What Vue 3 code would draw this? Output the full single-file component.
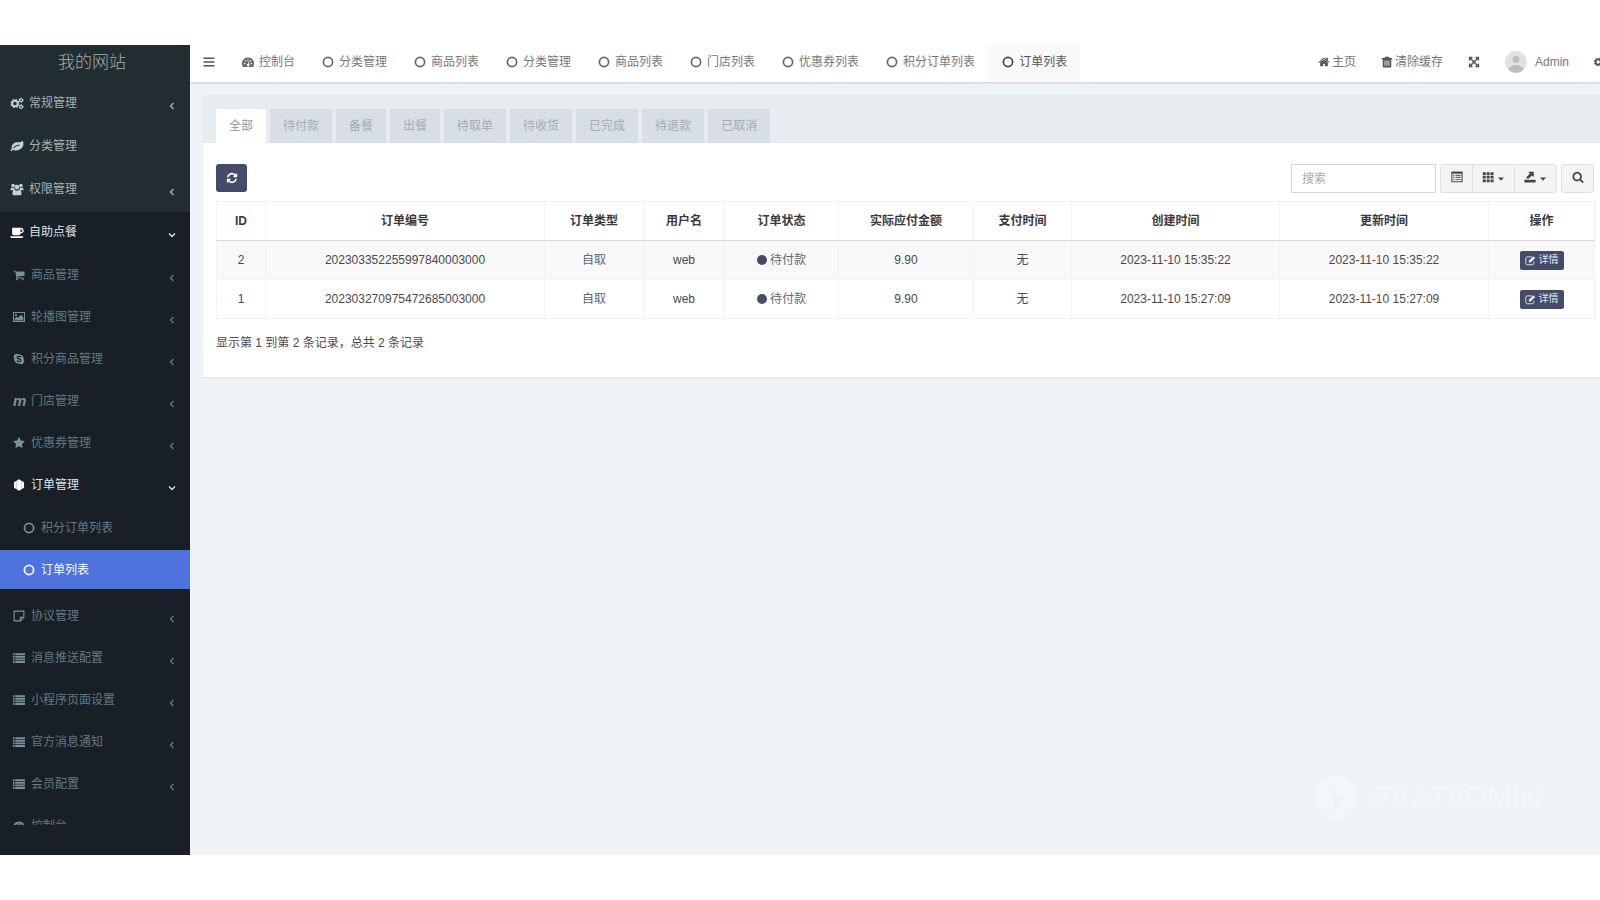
<template>
  <div class="page">
    <div class="shell">
      <aside class="sidebar">
        <a href="#" class="brand">我的网站</a>
        <nav class="menu-scroll">
          <ul class="menu">
            <li v-for="item in topMenu" :key="item.text">
              <a href="#" class="menu-link">
                <Icon :name="item.icon" class="menu-icon" />
                <span>{{ item.text }}</span>
                <Icon v-if="item.arrow" name="left" class="arrow" />
              </a>
            </li>
            <li class="open">
              <a href="#" class="menu-link">
                <Icon name="coffee" class="menu-icon" />
                <span>自助点餐</span>
                <Icon name="down" class="arrow" />
              </a>
              <ul class="submenu">
                <li v-for="item in subMenu" :key="item.text">
                  <a href="#" class="menu-link" :class="{ opened: item.children }">
                    <b v-if="item.icon === 'm'" class="menu-icon glyph-m">m</b>
                    <Icon v-else :name="item.icon" class="menu-icon" />
                    <span>{{ item.text }}</span>
                    <Icon v-if="!item.last" :name="item.children ? 'down' : 'left'" class="arrow" />
                  </a>
                  <ul v-if="item.children" class="leafmenu">
                    <li v-for="child in item.children" :key="child">
                      <a href="#" class="menu-link" :class="{ active: child === '订单列表' }">
                        <Icon name="circle" class="menu-icon" />
                        <span>{{ child }}</span>
                      </a>
                    </li>
                  </ul>
                </li>
              </ul>
            </li>
          </ul>
        </nav>
      </aside>

      <main class="main">
        <header class="topbar">
          <button type="button" class="toggle" aria-label="菜单"><Icon name="bars" /></button>
          <nav class="nav-tabs">
            <a
              v-for="(tab, idx) in navTabs"
              :key="idx"
              href="#"
              class="nav-tab"
              :class="{ active: idx === navTabs.length - 1 }"
            >
              <Icon :name="idx === 0 ? 'dashboard' : 'circle'" />
              <span>{{ tab }}</span>
            </a>
          </nav>
          <nav class="nav-right">
            <a href="#" class="nav-item"><Icon name="home" /><span>主页</span></a>
            <a href="#" class="nav-item"><Icon name="trash" /><span>清除缓存</span></a>
            <a href="#" class="nav-item" aria-label="全屏"><Icon name="arrows" /></a>
            <a href="#" class="nav-item user"><Icon name="avatar" class="avatar" /><span>Admin</span></a>
            <a href="#" class="nav-item" aria-label="设置"><Icon name="cogs" /></a>
          </nav>
        </header>

        <section class="panel">
          <ul class="status-tabs">
            <li v-for="(s, idx) in statuses" :key="s">
              <a href="#" :class="{ active: idx === 0 }">{{ s }}</a>
            </li>
          </ul>
          <div class="panel-body">
            <div class="toolbar">
              <button type="button" class="btn-refresh" aria-label="刷新"><Icon name="refresh" /></button>
              <input v-model="keyword" class="search" type="text" placeholder="搜索" aria-label="搜索" />
              <div class="btn-group">
                <button type="button" class="btn" aria-label="切换"><Icon name="list-alt" /></button>
                <button type="button" class="btn wide" aria-label="列"><Icon name="grid" /><Icon name="caret" class="caret" /></button>
                <button type="button" class="btn wide" aria-label="导出"><Icon name="export" /><Icon name="caret" class="caret" /></button>
              </div>
              <button type="button" class="btn single" aria-label="普通搜索"><Icon name="search" /></button>
            </div>
            <table class="orders">
              <thead>
                <tr>
                  <th v-for="c in columns" :key="c">{{ c }}</th>
                </tr>
              </thead>
              <tbody>
                <tr v-for="row in orders" :key="row.id">
                  <td>{{ row.id }}</td>
                  <td>{{ row.no }}</td>
                  <td><a href="#" class="type">自取</a></td>
                  <td>web</td>
                  <td><span class="state"><i class="dot"></i>待付款</span></td>
                  <td>9.90</td>
                  <td>无</td>
                  <td>{{ row.time }}</td>
                  <td>{{ row.time }}</td>
                  <td>
                    <button type="button" class="btn-detail"><Icon name="edit" /><span>详情</span></button>
                  </td>
                </tr>
              </tbody>
            </table>
            <p class="summary">显示第 1 到第 2 条记录，总共 2 条记录</p>
          </div>
        </section>

        <div class="watermark"><Icon name="bolt" /><span>FASTADMIN</span></div>
      </main>
    </div>
  </div>
</template>

<script setup>
import { h, ref } from 'vue';

// name: [viewBox, svg markup]
const icons = {
  left: ['0 0 12 12', '<path d="M7.500 3L4.500 6l3 3" fill="none" stroke="currentColor" stroke-width="1.400"/>'],
  down: ['0 0 12 12', '<path d="M3 4.500l3 3 3-3" fill="none" stroke="currentColor" stroke-width="1.400"/>'],
  circle: ['0 0 12 12', '<circle cx="6" cy="6" r="4.600" fill="none" stroke="currentColor" stroke-width="1.700"/>'],
  bars: ['0 0 12 12', '<path d="M.5 1.500h11v1.500H.5zM.5 5.300h11v1.500H.5zM.5 9h11v1.500H.5z"/>'],
  caret: ['0 0 8 8', '<path d="M1 2.500h6L4 5.700z"/>'],
  dashboard: ['0 0 16 16', '<path fill-rule="evenodd" d="M8 2a8 8 0 0 0-6.800 12.200c.2.300.4.300.7.300h12.200c.3 0 .5 0 .7-.3A8 8 0 0 0 8 2zM3.400 9a1.100 1.100 0 1 1 0 2.200 1.100 1.100 0 0 1 0-2.200zM4.800 5.600a1.100 1.100 0 1 1 0 2.200 1.100 1.100 0 0 1 0-2.200zM8 4.200a1.100 1.100 0 1 1 0 2.200 1.100 1.100 0 0 1 0-2.200zM12.600 9a1.100 1.100 0 1 1 0 2.200 1.100 1.100 0 0 1 0-2.200zM11.300 5.600a1.100 1.100 0 1 1 0 2.200 1.100 1.100 0 0 1 0-2.200zM9 7l.9.300-.8 3.200a1.700 1.700 0 1 1-1-.2z"/>'],
  cogs: ['0 0 16 16', '<circle cx="5.500" cy="8" r="3.400" fill="none" stroke="currentColor" stroke-width="2.400"/><circle cx="5.500" cy="8" r="4.900" fill="none" stroke="currentColor" stroke-width="1.400" stroke-dasharray="2.200 1.650"/><circle cx="13" cy="4" r="1.800" fill="none" stroke="currentColor" stroke-width="1.500"/><circle cx="13" cy="4" r="2.700" fill="none" stroke="currentColor" stroke-width=".8" stroke-dasharray="1.400 1.400"/><circle cx="13" cy="12" r="1.800" fill="none" stroke="currentColor" stroke-width="1.500"/><circle cx="13" cy="12" r="2.700" fill="none" stroke="currentColor" stroke-width=".8" stroke-dasharray="1.400 1.400"/>'],
  leaf: ['0 0 1792 1792', '<path d="M1280 704q0-26-19-45t-45-19q-172 0-318 49.500t-259.500 134-235.500 219.500q-19 21-19 45 0 26 19 45t45 19q24 0 45-19 27-24 74-71t67-66q137-124 268.500-176t313.500-52q26 0 45-19t19-45zm512-198q0 95-20 193-46 224-184.500 383t-357.500 268q-214 108-438 108-148 0-286-47-15-5-88-42t-96-37q-16 0-39.500 32t-45 70-52.500 70-60 32q-43 0-63.500-17.500t-45.500-59.500q-2-4-6-11t-5.500-10-3-9.500-1.500-13.500q0-35 31-73.500t68-65.500 68-56 31-48q0-4-14-38t-16-44q-9-51-9-104 0-115 43.500-220t119-184.500 170.500-139 204-95.500q55-18 145-25.500t179.500-9 178.500-6 163.500-24 113.500-56.500l29.500-29.500 29.500-28 27-20 36.500-16 43.500-4.500q39 0 70.500 46t47.500 112 24 124 8 96z"/>'],
  users: ['0 0 16 16', '<circle cx="3.200" cy="3" r="2.200"/><circle cx="12.800" cy="3" r="2.200"/><circle cx="8" cy="5" r="3"/><path d="M0 8.700C0 6.800.6 5.400 1.500 5.400c.9.600 1.800.7 3 .4.100 1 .4 1.700 1 2.300l-1.300.8H1.200C.5 8.900 0 9.500 0 8.700zM16 8.700c0-1.900-.6-3.300-1.500-3.300-.9.600-1.800.7-3 .4-.1 1-.4 1.700-1 2.300l1.300.8h3c.7 0 1.200.6 1.200-.2zM2.500 13.200c0-3 .8-4.900 2.500-4.900 1.800 1.400 4.200 1.400 6 0 1.700 0 2.500 1.900 2.500 4.900 0 1.300-.8 2-2 2h-7c-1.200 0-2-.7-2-2z"/>'],
  coffee: ['0 0 1856 1792', '<path d="M1664 640q0-80-56-136t-136-56h-64v384h64q80 0 136-56t56-136zm-1664 768h1792q0 106-75 181t-181 75h-1280q-106 0-181-75t-75-181zm1856-768q0 159-112.500 271.500t-271.500 112.500h-64v32q0 92-66 158t-158 66h-704q-92 0-158-66t-66-158v-736q0-26 19-45t45-19h1152q159 0 271.500 112.500t112.500 271.500z"/>'],
  cart: ['0 0 1792 1792', '<path d="M704 1536q0 52-38 90t-90 38-90-38-38-90 38-90 90-38 90 38 38 90zm896 0q0 52-38 90t-90 38-90-38-38-90 38-90 90-38 90 38 38 90zm128-1088v512q0 24-16.500 42.500t-40.500 21.500l-1044 122q13 60 13 70 0 16-24 64h920q26 0 45 19t19 45-19 45-45 19h-1024q-26 0-45-19t-19-45q0-11 8-31.500t16-36 21.500-40 15.500-29.500l-177-823h-204q-26 0-45-19t-19-45 19-45 45-19h256q16 0 28.500 6.500t19.500 15.500 13 24.500 8 26 5.500 29.500 4.500 26h1201q26 0 45 19t19 45z"/>'],
  image: ['0 0 16 16', '<path d="M.7 2h14.600v12H.7z" fill="none" stroke="currentColor" stroke-width="1.400"/><circle cx="4" cy="5.500" r="1.500"/><path d="M2.300 12.500V10L5 7.500l1.600 1.600L10.700 5l3 3.300v4.200z"/>'],
  skype: ['0 0 16 16', '<path d="M4.600 1a4 4 0 0 1 2.500.7 6.500 6.500 0 0 1 7.200 7.500 4 4 0 0 1-5.600 5.200A6.500 6.500 0 0 1 1.500 7 4 4 0 0 1 4.600 1z"/><path d="M10.600 5.700C9.500 4 5.400 4.200 5.600 6.200c.2 2 5 1.200 5 3.500 0 2.100-4.300 2.200-5.300.3" fill="none" stroke="#181f26" stroke-width="1.500"/>'],
  star: ['0 0 1792 1792', '<path d="M1728 647q0 22-26 48l-363 354 86 500q1 7 1 20 0 21-10.500 35.500t-30.500 14.500q-19 0-40-12l-449-236-449 236q-22 12-40 12-21 0-31.500-14.500t-10.500-35.500q0-6 2-20l86-500-364-354q-25-27-25-48 0-37 56-46l502-73 225-455q19-41 49-41t49 41l225 455 502 73q56 9 56 46z"/>'],
  hexagon: ['0 0 16 16', '<path d="M8 .4l6.700 3.800v7.600L8 15.600l-6.700-3.800V4.200z"/><path d="M4.500 1.500v13M11.500 1.500v13" stroke="#181f26" stroke-width=".3"/>'],
  note: ['0 0 16 16', '<path d="M1.500 1.500h13v8.300L9.800 14.500H1.500zM14.500 9.800H9.800v4.700" fill="none" stroke="currentColor" stroke-width="1.500"/>'],
  list: ['0 0 16 16', '<path d="M0 1.500h2V4H0zM3 1.500h13V4H3zM0 5h2v2.500H0zM3 5h13v2.500H3zM0 8.500h2V11H0zM3 8.500h13V11H3zM0 12h2v2.500H0zM3 12h13v2.500H3z"/>'],
  home: ['0 0 1792 1792', '<path d="M1472 992v480q0 26-19 45t-45 19h-384v-384h-256v384h-384q-26 0-45-19t-19-45v-480q0-1 .5-3t.5-3l575-474 575 474q1 2 1 6zm223-69l-62 74q-8 9-21 11h-3q-13 0-21-7l-692-577-692 577q-12 8-24 7-13-2-21-11l-62-74q-8-10-7-23.500t11-21.500l719-599q32-26 76-26t76 26l244 204v-195q0-14 9-23t23-9h192q14 0 23 9t9 23v408l219 182q10 8 11 21.500t-7 23.500z"/>'],
  trash: ['0 0 16 16', '<path fill-rule="evenodd" d="M5.500 1h5l.7 1.800H15v1.400h-1.300V14c0 .7-.5 1.200-1.200 1.200h-9c-.7 0-1.200-.5-1.200-1.200V4.200H1V2.800h3.800zM4.800 6v7h1.100V6zm2.600 0v7h1.100V6zM10 6v7h1.100V6z"/>'],
  arrows: ['0 0 1792 1792', '<path d="M1411 541l-355 355 355 355 144-144q29-31 70-14 39 17 39 59v448q0 26-19 45t-45 19h-448q-42 0-59-40-17-39 14-69l144-144-355-355-355 355 144 144q31 30 14 69-17 40-59 40h-448q-26 0-45-19t-19-45v-448q0-42 40-59 39-17 69 14l144 144 355-355-355-355-144 144q-19 19-45 19-12 0-24-5-40-17-40-59v-448q0-26 19-45t45-19h448q42 0 59 40 17 39-14 69l-144 144 355 355 355-355-144-144q-31-30-14-69 17-40 59-40h448q26 0 45 19t19 45v448q0 42-39 59-13 5-25 5-26 0-45-19z"/>'],
  avatar: ['0 0 22 22', '<circle cx="11" cy="11" r="11" fill="#e2e2e2"/><circle cx="11" cy="8.500" r="3.500" fill="#bdbdbd"/><path d="M3.500 18.500c1-3.500 4-4.500 7.500-4.500s6.500 1 7.500 4.500A11 11 0 0 1 11 22a11 11 0 0 1-7.500-3.500z" fill="#bdbdbd"/>'],
  refresh: ['0 0 1792 1792', '<path d="M1639 1056q0 5-1 7-64 268-268 434.500t-478 166.500q-146 0-282.500-55t-243.500-157l-129 129q-19 19-45 19t-45-19-19-45v-448q0-26 19-45t45-19h448q26 0 45 19t19 45-19 45l-137 137q71 66 161 102t187 36q134 0 250-65t186-179q11-17 53-117 8-23 30-23h192q13 0 22.500 9.500t9.500 22.500zm25-800v448q0 26-19 45t-45 19h-448q-26 0-45-19t-19-45 19-45l138-138q-148-137-349-137-134 0-250 65t-186 179q-11 17-53 117-8 23-30 23h-199q-13 0-22.500-9.500t-9.500-22.500v-7q65-268 270-434.500t480-166.500q146 0 284 55.500t245 156.500l130-129q19-19 45-19t45 19 19 45z"/>'],
  'list-alt': ['0 0 16 16', '<path d="M1.200 1.700h13.600v12.600H1.200z" fill="none" stroke="currentColor" stroke-width="1.400"/><path d="M1 1h14v2.500H1z"/><path d="M3 5h1.800v1.500H3zM3 7.800h1.800v1.500H3zM3 10.600h1.800v1.500H3zM6 5h7v1.500H6zM6 7.800h7v1.500H6zM6 10.600h7v1.500H6z" opacity=".8"/>'],
  grid: ['0 0 16 16', '<path d="M1 1.500h4v3.700H1zM6.200 1.500h4v3.700h-4zM11.400 1.500h4v3.700h-4zM1 6.300h4V10H1zM6.200 6.300h4V10h-4zM11.400 6.300h4V10h-4zM1 11.200h4v3.700H1zM6.200 11.200h4v3.700h-4zM11.400 11.200h4v3.700h-4z"/>'],
  export: ['0 0 16 16', '<path d="M.5 11.800h15v3.400H.5zM5.500 1H13v7.200l-2.400-2.300-4 4.200H3.200V8.300L7.800 3.300z"/>'],
  search: ['0 0 1792 1792', '<path d="M1216 832q0-185-131.500-316.500t-316.500-131.500-316.500 131.500-131.500 316.500 131.500 316.500 316.500 131.500 316.500-131.500 131.500-316.500zm512 832q0 52-38 90t-90 38q-54 0-90-38l-343-342q-179 124-399 124-143 0-273.500-55.500t-225-150-150-225-55.500-273.500 55.500-273.500 150-225 225-150 273.500-55.500 273.500 55.500 225 150 150 225 55.500 273.500q0 220-124 399l343 343q37 37 37 90z"/>'],
  edit: ['0 0 16 16', '<path d="M10 2.700H3.200C2 2.700 1.200 3.500 1.200 4.700v7.500c0 1.200.8 2 2 2h7.600c1.200 0 2-.8 2-2V9.800" fill="none" stroke="currentColor" stroke-width="1.300"/><path d="M5.500 8.300l6.600-6.600 2.700 2.700L8.200 11H5.500z"/>'],
  bolt: ['0 0 42 42', '<path fill-rule="evenodd" d="M21 0a21 21 0 1 1 0 42 21 21 0 0 1 0-42zM22 10c-4 2-7 7-7 13h5l-2 12c6-4 9-9 9-16h-5z"/>'],
};

const Icon = (props) =>
  h('svg', { class: 'icon', viewBox: icons[props.name][0], 'aria-hidden': 'true', innerHTML: icons[props.name][1] });
Icon.props = ['name'];

const keyword = ref('');

const topMenu = [
  { icon: 'cogs', text: '常规管理', arrow: true },
  { icon: 'leaf', text: '分类管理' },
  { icon: 'users', text: '权限管理', arrow: true },
];

const subMenu = [
  { icon: 'cart', text: '商品管理' },
  { icon: 'image', text: '轮播图管理' },
  { icon: 'skype', text: '积分商品管理' },
  { icon: 'm', text: '门店管理' },
  { icon: 'star', text: '优惠券管理' },
  { icon: 'hexagon', text: '订单管理', children: ['积分订单列表', '订单列表'] },
  { icon: 'note', text: '协议管理' },
  { icon: 'list', text: '消息推送配置' },
  { icon: 'list', text: '小程序页面设置' },
  { icon: 'list', text: '官方消息通知' },
  { icon: 'list', text: '会员配置' },
  { icon: 'dashboard', text: '控制台', last: true },
];

const navTabs = ['控制台', '分类管理', '商品列表', '分类管理', '商品列表', '门店列表', '优惠券列表', '积分订单列表', '订单列表'];
const statuses = ['全部', '待付款', '备餐', '出餐', '待取单', '待收货', '已完成', '待退款', '已取消'];
const columns = ['ID', '订单编号', '订单类型', '用户名', '订单状态', '实际应付金额', '支付时间', '创建时间', '更新时间', '操作'];
const orders = [
  { id: 2, no: '202303352255997840003000', time: '2023-11-10 15:35:22' },
  { id: 1, no: '202303270975472685003000', time: '2023-11-10 15:27:09' },
];
</script>

<style>
body {
  background: #fff;
  overflow: hidden;
}
</style>

<style scoped>
.page {
  box-sizing: border-box;
  height: 100vh;
  padding: 45px 0;
  font: 12px/18px "Liberation Sans", "Noto Sans CJK SC", sans-serif;
  color: #4a4a4a;
}

.page a {
  color: inherit;
  text-decoration: none;
}

.page ul {
  list-style: none;
  margin: 0;
  padding: 0;
}

.page button,
.page input {
  font: inherit;
  box-sizing: border-box;
}

.icon {
  width: 12px;
  height: 12px;
  flex-shrink: 0;
  fill: currentColor;
}

.shell {
  display: flex;
  height: 100%;
  overflow: hidden;
}

/* Sidebar */
.sidebar {
  width: 190px;
  flex-shrink: 0;
  box-sizing: border-box;
  display: flex;
  flex-direction: column;
  background: #181f26;
  padding-bottom: 30px;
}

.page .brand {
  height: 38px;
  flex-shrink: 0;
  padding-right: 6px;
  background: #222d32;
  color: #a3adb1;
  font-size: 17px;
  font-weight: 300;
  line-height: 36px;
  text-align: center;
}

.menu-scroll {
  flex: 1;
  min-height: 0;
  overflow: hidden;
}

.menu > li {
  padding-bottom: 3px;
  background: #222d32;
  color: #a4b1b7;
}

.menu > li.open {
  background: #181f26;
  color: #dde3e6;
}

.menu-link {
  display: flex;
  align-items: center;
  gap: 6px;
  height: 40px;
  padding: 0 12px 0 10px;
}

.menu > li > .menu-link {
  gap: 5px;
}

.menu > li > .menu-link .menu-icon {
  width: 14px;
  height: 13px;
  color: #c3d0d6;
}

.menu > li.open > .menu-link .menu-icon {
  color: #fff;
}

.arrow {
  margin: 6px 0 0 auto;
}

.page .submenu {
  padding-top: 3px;
  color: #607a83;
}

.submenu .menu-link {
  height: 39px;
  margin-bottom: 3px;
  padding-left: 13px;
}

.submenu .menu-icon {
  color: #78929c;
}

.page .leafmenu {
  padding: 1px 0 4px;
}

.leafmenu .menu-link {
  padding-left: 23px;
}

.page .menu-link.opened {
  color: #dde3e6;
}

.page .menu-link.active {
  background: #4e73df;
  color: #fff;
}

.opened .menu-icon,
.active .menu-icon {
  color: #fff;
}

.glyph-m {
  width: 12px;
  font-size: 15px;
  font-style: italic;
}

/* Top bar */
.main {
  position: relative;
  flex: 1;
  min-width: 0;
  overflow: hidden;
  background: #eff3f6;
}

.topbar {
  display: flex;
  height: 37px;
  background: #fff;
  color: #777;
  box-shadow: 0 1px 2px rgba(0, 20, 20, 0.15);
}

.toggle {
  display: flex;
  align-items: center;
  width: 38px;
  padding: 0 0 4px 13px;
  border: 0;
  background: none;
  color: #555;
}

.nav-tabs,
.nav-right {
  display: flex;
}

.nav-tab {
  display: flex;
  align-items: center;
  gap: 5px;
  padding: 0 13px 4px 14px;
}

.nav-tab .icon {
  color: #666;
}

.page .nav-tab.active {
  background: #f9f9f9;
  color: #555;
}

.nav-tab.active .icon {
  color: #444;
}

.nav-right {
  margin: 0 -6px 0 auto;
  gap: 25px;
}

.nav-item {
  display: flex;
  align-items: center;
  gap: 2px;
  padding-bottom: 4px;
}

.nav-item .icon {
  color: #555;
}

.nav-item.user {
  gap: 8px;
}

.avatar {
  width: 22px;
  height: 22px;
}

/* Panel */
.panel {
  margin: 13px 0 0 13px;
  background: #fff;
  box-shadow: 0 1px 1px rgba(0, 0, 0, 0.05);
}

.page .status-tabs {
  display: flex;
  gap: 4px;
  padding: 14px 13px 0;
  background: #e7ecf0;
}

.status-tabs a {
  display: block;
  padding: 0 13px;
  line-height: 34px;
  background: #d8dee5;
  color: #a2abb2;
}

.page .status-tabs a.active {
  background: #fff;
  color: #8f9599;
}

.panel-body {
  padding: 21px 6px 25px 13px;
}

.toolbar {
  display: flex;
  gap: 4px;
  margin-bottom: 8px;
}

.btn-refresh {
  display: flex;
  align-items: center;
  justify-content: center;
  width: 31px;
  height: 28px;
  padding: 0;
  border: 0;
  border-radius: 3px;
  background: #444c69;
  color: #fff;
}

.search {
  width: 145px;
  height: 29px;
  margin-left: auto;
  padding: 0 10px;
  border: 1px solid #d6d6d6;
  border-radius: 0;
  background: #fff;
  color: #555;
  outline: none;
}

.search::placeholder {
  color: #aaa;
}

.btn-group {
  display: flex;
}

.btn {
  display: flex;
  align-items: center;
  justify-content: center;
  gap: 3px;
  width: 33px;
  height: 29px;
  padding: 0 0 3px;
  border: 1px solid #e0e0e0;
  border-radius: 3px;
  background: #f4f4f4;
  color: #444;
}

.btn.wide {
  width: 43px;
}

.btn-group .btn {
  border-radius: 0;
}

.btn-group .btn + .btn {
  margin-left: -1px;
}

.btn-group .btn:first-child {
  border-radius: 3px 0 0 3px;
}

.btn-group .btn:last-child {
  border-radius: 0 3px 3px 0;
}

.caret {
  width: 8px;
  height: 8px;
  margin-top: 3px;
}

.orders {
  width: 100%;
  table-layout: fixed;
  border-collapse: collapse;
  text-align: center;
}

.orders th,
.orders td {
  box-sizing: border-box;
  height: 39px;
  padding: 0;
  border: 1px solid #f2f2f2;
}

.orders th {
  border-bottom-color: #d9d9d9;
  color: #3a3a3a;
  font-weight: bold;
}

.orders th:nth-child(1) { width: 49px; }
.orders th:nth-child(2) { width: 279px; }
.orders th:nth-child(3) { width: 99px; }
.orders th:nth-child(4) { width: 81px; }
.orders th:nth-child(5) { width: 114px; }
.orders th:nth-child(6) { width: 135px; }
.orders th:nth-child(7) { width: 98px; }
.orders th:nth-child(8) { width: 208px; }
.orders th:nth-child(9) { width: 209px; }
.orders th:nth-child(10) { width: 106px; }

.orders tbody tr:nth-child(odd) {
  background: #f8f8f8;
}

.page .type,
.state {
  color: #5d6684;
}

.state {
  display: inline-flex;
  align-items: center;
  gap: 3px;
}

.dot {
  width: 10px;
  height: 10px;
  border-radius: 50%;
  background: #444c69;
}

.page .btn-detail {
  display: inline-flex;
  align-items: center;
  gap: 3px;
  height: 19px;
  padding: 0 5px;
  border: 0;
  border-radius: 2px;
  background: #444c69;
  color: #e8eaf0;
  font-size: 10px;
  vertical-align: middle;
}

.btn-detail .icon {
  width: 11px;
  height: 11px;
}

.summary {
  margin: 15px 0 0;
}

.watermark {
  position: absolute;
  right: 58px;
  bottom: 37px;
  display: flex;
  align-items: center;
  gap: 16px;
  color: #f3f7fa;
  font-size: 30px;
  line-height: 42px;
}

.watermark .icon {
  width: 42px;
  height: 42px;
}
</style>
